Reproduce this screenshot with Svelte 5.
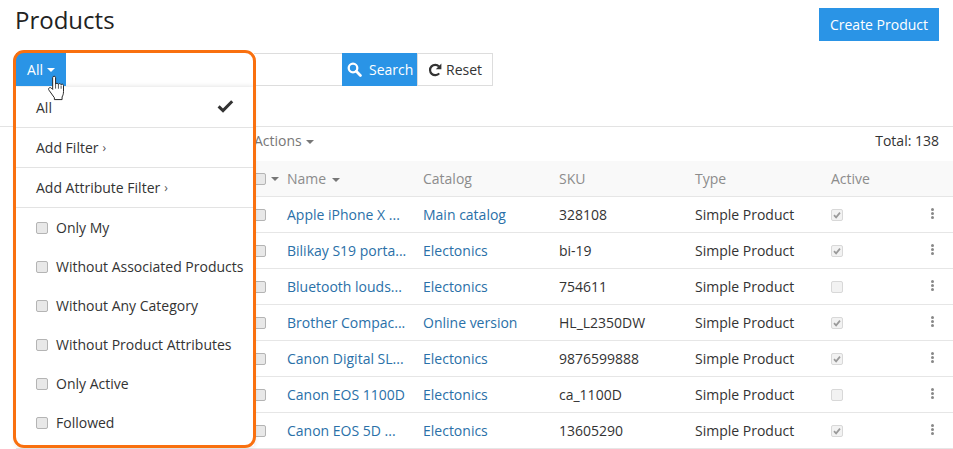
<script>
  const products = [
    { name: 'Apple iPhone X ...', catalog: 'Main catalog', sku: '328108', active: true },
    { name: 'Bilikay S19 porta...', catalog: 'Electonics', sku: 'bi-19', active: true },
    { name: 'Bluetooth louds...', catalog: 'Electonics', sku: '754611', active: false },
    { name: 'Brother Compac...', catalog: 'Online version', sku: 'HL_L2350DW', active: true },
    { name: 'Canon Digital SL...', catalog: 'Electonics', sku: '9876599888', active: true },
    { name: 'Canon EOS 1100D', catalog: 'Electonics', sku: 'ca_1100D', active: false },
    { name: 'Canon EOS 5D ...', catalog: 'Electonics', sku: '13605290', active: true }
  ];

  const menuLinks = ['Add Filter', 'Add Attribute Filter'];
  const menuChecks = [
    'Only My',
    'Without Associated Products',
    'Without Any Category',
    'Without Product Attributes',
    'Only Active',
    'Followed'
  ];
</script>

<div class="page">
  <header class="top">
    <h1>Products</h1>
    <button class="btn primary create">Create Product</button>
  </header>

  <div class="filters">
    <div class="search-input"></div>
    <button class="btn primary search">
      <svg width="15" height="15" viewBox="0 0 15 15">
        <circle cx="6" cy="6" r="4.300" fill="none" stroke="#fff" stroke-width="2.300" />
        <path d="M9.300 9.300 13.400 13.400" stroke="#fff" stroke-width="2.800" stroke-linecap="round" />
      </svg>
      Search
    </button>
    <button class="btn reset">
      <svg width="14" height="14" viewBox="0 0 14 14">
        <path d="M11.200 10.400A5.200 5.200 0 1 1 11 3.400" fill="none" stroke="#333" stroke-width="2.200" />
        <path d="M13.400.6V6.200H7.800z" fill="#333" />
      </svg>
      Reset
    </button>
  </div>

  <div class="divider"></div>

  <div class="toolbar">
    <span class="actions">Actions <i class="caret"></i></span>
    <span class="total">Total: 138</span>
  </div>

  <div class="table">
    <div class="row head">
      <span class="cell-check"><span class="box"></span><i class="caret"></i></span>
      <span>Name <i class="caret name-caret"></i></span>
      <span>Catalog</span>
      <span>SKU</span>
      <span>Type</span>
      <span>Active</span>
      <span></span>
    </div>
    {#each products as p}
      <div class="row">
        <span class="cell-check"><span class="box"></span></span>
        <a href="#top">{p.name}</a>
        <a href="#top">{p.catalog}</a>
        <span>{p.sku}</span>
        <span>Simple Product</span>
        <span class="active-cell">
          <span class="mini">
            {#if p.active}
              <svg width="8" height="8" viewBox="0 0 8 8">
                <path d="M1 4.200 3.100 6.400 7 1.600" fill="none" stroke="#9a9a9a" stroke-width="1.700" />
              </svg>
            {/if}
          </span>
        </span>
        <span class="dots"><i></i><i></i><i></i></span>
      </div>
    {/each}
  </div>

  <!-- open filter dropdown, sits over the table -->
  <div class="dropdown">
    <div class="all-bar"><button class="btn primary all">All <i class="caret white"></i></button></div>
    <div class="menu">
      <div class="menu-item first">
        <span>All</span>
        <svg width="17" height="14" viewBox="0 0 17 14">
          <path d="M1.600 7.400 6 11.600 15.200 2.200" fill="none" stroke="#333" stroke-width="3" />
        </svg>
      </div>
      {#each menuLinks as label}
        <div class="menu-item">{label} <small>›</small></div>
      {/each}
      <div class="menu-checks">
        {#each menuChecks as label}
          <div class="check-item"><span class="box"></span>{label}</div>
        {/each}
      </div>
    </div>
  </div>

  <div class="highlight"></div>

  <svg class="hand" width="20" height="26" viewBox="0 0 18 24">
    <path
      d="M5 2.400c0-1.700 2.700-1.700 2.700 0v6.200c.3-1.300 2.400-1.300 2.600.1.300-1.100 2.300-1 2.500.3.400-.9 2.200-.7 2.200.7v5.600c0 2.400-.6 3.600-1.300 5v2.400H6.600v-1.700L1.600 14c-1.300-1.600.8-3.200 2.200-1.900l1.200 1.200z"
      fill="#fff"
      stroke="#222"
      stroke-width=".9"
      stroke-linejoin="round"
    />
    <path d="M7.700 8.600v4M10.300 8.700v4M12.800 9.700v3" stroke="#222" stroke-width=".7" />
  </svg>
</div>

<style>
  :global(body) {
    margin: 0;
    background: #fff;
    overflow: hidden;
  }

  .page {
    position: relative;
    width: 953px;
    height: 449px;
    overflow: hidden;
    font-family: "Open Sans", sans-serif;
    font-size: 14px;
    color: #333;
  }

  .btn {
    border: 0;
    padding: 0;
    font: inherit;
    display: inline-flex;
    align-items: center;
    justify-content: center;
  }

  .primary {
    background: #2a94e6;
    color: #fff;
  }

  .top {
    display: flex;
    justify-content: space-between;
    align-items: flex-start;
    height: 53px;
    padding: 8px 14px 0 15px;
    box-sizing: border-box;
  }

  h1 {
    margin: -3px 0 0;
    font-size: 24px;
    font-weight: 400;
    line-height: 30px;
    color: #222;
  }

  .create {
    width: 120px;
    height: 33px;
  }

  .filters {
    display: flex;
    height: 33px;
    padding-left: 16px;
  }

  .search-input {
    width: 326px;
    box-sizing: border-box;
    border: 1px solid #ddd;
    border-right: 0;
  }

  .search {
    width: 75px;
    gap: 7px;
    justify-content: flex-start;
    padding-left: 5px;
    box-sizing: border-box;
  }

  .reset {
    width: 76px;
    gap: 4px;
    background: #fff;
    color: #333;
    border: 1px solid #ddd;
  }

  .divider {
    margin-top: 40px;
    border-top: 1px solid #e3e3e3;
  }

  .toolbar {
    display: flex;
    justify-content: space-between;
    align-items: center;
    height: 34px;
    box-sizing: border-box;
    padding: 0 14px 8px 254px;
  }

  .actions {
    color: #777;
  }

  .caret {
    display: inline-block;
    width: 0;
    height: 0;
    margin-left: 1px;
    vertical-align: 2px;
    border: 4px solid transparent;
    border-top-color: #777;
    border-bottom: 0;
  }

  .caret.white {
    border-top-color: #fff;
  }

  .table {
    margin-left: 16px;
    font-size: 14px;
  }

  .row {
    display: grid;
    grid-template-columns: 271px 136px 136px 136px 136px 90px 32px;
    align-items: center;
    height: 36px;
    border-bottom: 1px solid #e6e6e6;
    box-sizing: border-box;
  }

  .head {
    background: #f9f9f9;
    color: #8c8c8c;
  }

  .cell-check {
    display: flex;
    align-items: center;
    justify-content: flex-end;
    gap: 4px;
    padding-right: 21px;
  }

  .head .cell-check {
    padding-right: 8px;
  }

  .name-caret {
    margin-left: 2px;
  }

  .box {
    display: inline-block;
    flex: none;
    width: 12px;
    height: 12px;
    box-sizing: border-box;
    border: 1px solid #b4b4b4;
    border-radius: 2px;
    background: #e8e8e8;
  }

  a {
    color: #2a70a8;
    text-decoration: none;
  }

  .active-cell {
    display: flex;
  }

  .mini {
    display: flex;
    align-items: center;
    justify-content: center;
    width: 12px;
    height: 12px;
    box-sizing: border-box;
    border: 1px solid #d8d8d8;
    border-radius: 2px;
    background: #f2f2f2;
  }

  .dots {
    display: flex;
    flex-direction: column;
    gap: 1px;
    align-items: center;
    width: 4px;
    margin: -3px 0 0 9px;
  }

  .dots i {
    width: 3px;
    height: 3px;
    border-radius: 50%;
    background: #888;
  }

  .dropdown {
    position: absolute;
    left: 16px;
    top: 53px;
    width: 238px;
  }

  .all-bar {
    height: 33px;
    background: #fff;
  }

  .all {
    width: 50px;
    height: 33px;
    gap: 3px;
  }

  .menu {
    margin-top: 1px;
    background: #fff;
    box-shadow: 0 0 5px rgba(0, 0, 0, 0.14);
  }

  .menu-item {
    display: flex;
    align-items: center;
    gap: 4px;
    height: 40px;
    padding: 0 20px;
    box-sizing: border-box;
    border-bottom: 1px solid #e3e3e3;
  }

  .menu-item small {
    font-size: 12px;
    line-height: 1;
    color: #555;
  }

  .first {
    height: 41px;
    justify-content: space-between;
    padding-top: 1px;
  }

  .first svg {
    margin-top: -3px;
  }

  .menu-checks {
    padding-bottom: 4px;
  }

  .check-item {
    display: flex;
    align-items: center;
    gap: 8px;
    height: 39px;
    padding-left: 20px;
    white-space: nowrap;
  }

  .highlight {
    position: absolute;
    left: 13px;
    top: 50px;
    width: 243px;
    height: 398px;
    box-sizing: border-box;
    border: 3px solid #f9700f;
    border-radius: 11px;
    pointer-events: none;
  }

  .hand {
    position: absolute;
    left: 47px;
    top: 75px;
  }
</style>
